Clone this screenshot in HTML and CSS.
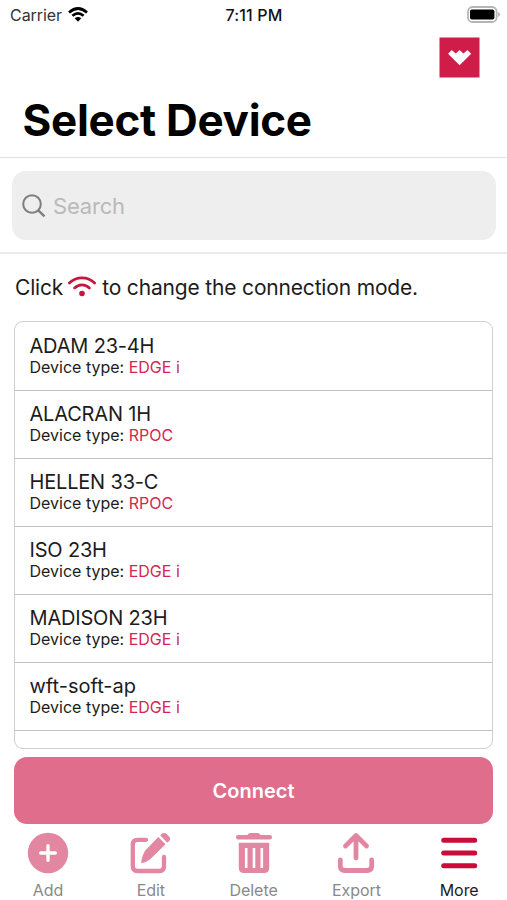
FILE: index.html
```html
<!DOCTYPE html>
<html lang="en">
<head>
<meta charset="utf-8">
<title>Select Device</title>
<link rel="stylesheet" href="styles.css">
</head>
<body>
<div class="app">
  <div class="status">
    <div class="carrier"><span>Carrier</span>
      <svg class="status-wifi" viewBox="0 0 20 15" width="20" height="15"><g fill="none" stroke="#000" stroke-width="2.7"><path d="M1 5.4Q10-2.4 19 5.4"/><path d="M4.4 8.8Q10 4 15.6 8.8"/></g><path d="M6.7 11.3Q10 8.6 13.3 11.3L10 14.7Z"/></svg>
    </div>
    <time class="clock">7:11 PM</time>
    <svg class="battery" viewBox="0 0 33 17" width="33" height="17"><rect x="1" y="1" width="28.6" height="15" rx="4.6" fill="#fff" stroke="#b5b5b5" stroke-width="1.8"/><rect x="3" y="3.4" width="24.4" height="10.2" rx="1.8"/><path d="M31.2 6v5q1.7-.8 1.7-2.5T31.2 6Z" fill="#aaa"/></svg>
  </div>
  <header class="header">
    <svg class="brand" viewBox="0 0 41 41" width="41" height="41"><path fill="#d01c48" d="M.5.5h40v40H.5z"/><path fill="#fff" d="M9 16.8 12.8 13l3.9 3.5 3.9-3.5 3.9 3.5 3.9-3.5 3.8 3.8L20.6 28.2Z"/></svg>
    <h1 class="title">Select Device</h1>
  </header>
  <div class="search-wrap">
    <div class="search">
      <svg viewBox="0 0 24 24" width="24" height="24" fill="none" stroke="#7e7e7e"><circle cx="10" cy="10" r="8.8" stroke-width="2"/><path d="m16.3 16.3 6.2 6" stroke-width="2.4"/></svg>
      <span>Search</span>
    </div>
  </div>
  <p class="hint"><span>Click</span>
    <svg class="hint-wifi" viewBox="0 0 28 21" width="28" height="21"><g fill="none" stroke="#c4163f" stroke-width="2.7" stroke-linecap="round"><path d="M1.4 7C8 .1 20 .1 26.6 7"/><path d="M6.6 12c4.2-4.3 10.6-4.3 14.8 0"/></g><circle cx="14" cy="17.5" r="2.8" fill="#c4163f"/></svg>
    <span>to change the connection mode.</span></p>
  <ul class="devices">
    <li><b>ADAM 23-4H</b><span>Device type: <em>EDGE i</em></span></li>
    <li><b>ALACRAN 1H</b><span>Device type: <em>RPOC</em></span></li>
    <li><b>HELLEN 33-C</b><span>Device type: <em>RPOC</em></span></li>
    <li><b>ISO 23H</b><span>Device type: <em>EDGE i</em></span></li>
    <li><b>MADISON 23H</b><span>Device type: <em>EDGE i</em></span></li>
    <li><b class="lower">wft-soft-ap</b><span>Device type: <em>EDGE i</em></span></li>
  </ul>
  <button class="connect">Connect</button>
  <nav class="tabs">
    <a><svg viewBox="0 0 42 42" width="42" height="42"><circle cx="21" cy="21" r="20.2" fill="#e386a1"/><path d="M21 13.6v14.8M13.6 21h14.8" stroke="#fff" stroke-width="3.3" stroke-linecap="round"/></svg><span>Add</span></a>
    <a><svg viewBox="0 0 42 42" width="42" height="42"><path d="M16 7.8H7.5Q2.8 7.8 2.8 12.5v22Q2.8 39 7.5 39h22Q34 39 34 34.5V25" fill="none" stroke="#e386a1" stroke-width="4.3" stroke-linecap="round"/><path d="M28.3 5 35.5 12.2 20.2 27.3Q15.5 31 11.2 31.2 11.2 26 15 18.8ZM30.2 3.2 32.1 1.6Q34.5.1 37 2.2L39.3 4.7Q41 7.2 39.2 9L37.3 10.7Z" fill="#e386a1"/></svg><span>Edit</span></a>
    <a><svg viewBox="0 0 42 42" width="42" height="42"><path d="M14.5 3Q15.5 1 17.5 1h7Q26.5 1 27.5 3H37q2 0 2 2.2t-2 2.4H5Q3 7.6 3 5.2t2-2.2ZM5.8 10.8h30.4V36Q36.2 41 31 41H11Q5.8 41 5.8 36Z" fill="#e386a1"/><path d="M13.2 16v20M21 16v20M28.8 16v20" stroke="#fff" stroke-width="2.6"/></svg><span>Delete</span></a>
    <a><svg viewBox="0 0 42 42" width="42" height="42" fill="none" stroke="#e386a1" stroke-width="4.8" stroke-linecap="round" stroke-linejoin="round"><path d="M21 26V4M10.5 14 21 3.5 31.5 14M5.3 28v6Q5.3 38.5 10 38.5h22Q36.7 38.5 36.7 34v-6"/></svg><span>Export</span></a>
    <a class="active"><svg viewBox="0 0 42 42" width="42" height="42" stroke="#c80d39" stroke-width="5" stroke-linecap="round"><path d="M5.7 8.3h31M5.7 21h31M5.7 33.7h31"/></svg><span>More</span></a>
  </nav>
</div>
</body>
</html>
```
FILE: styles.css
```css
* { box-sizing: border-box; }
body { margin: 0; background: #fff; color: #1c1c1c; font-family: Inter, "Liberation Sans", sans-serif; }
svg { display: block; flex: none; }
.app { width: 507px; height: 900px; display: flex; flex-direction: column; overflow: hidden; }
.status { flex: none; height: 30px; padding: 0 7px 0 10px; display: grid; grid-template-columns: 1fr auto 1fr; align-items: center; font-size: 16px; }
.carrier { display: flex; align-items: center; gap: 6px; color: #333; letter-spacing: -.05px; }
.status-wifi { margin-bottom: 1px; }
.clock { font-weight: 500; color: #111; letter-spacing: .15px; margin-right: 2px; }
.battery { justify-self: end; margin-bottom: 2px; }
.header { flex: none; height: 128px; border-bottom: 1px solid #e2e2e2; padding: 7px 27px 0 23px; }
.brand { margin-left: auto; }
.title { margin: 15px 0 0 -.5px; font-size: 44px; line-height: 54px; font-weight: 700; color: #000; letter-spacing: -.3px; white-space: nowrap; }
.search-wrap { flex: none; height: 96px; border-bottom: 2px solid #ebebeb; padding: 13px 11px 0 12px; }
.search { height: 69px; border-radius: 14px; background: #eee; display: flex; align-items: center; gap: 7px; padding-left: 10px; font-size: 22px; letter-spacing: -.2px; color: #b9b9bb; }
.hint { flex: none; height: 67px; margin: 0; padding: 0 15px; display: flex; align-items: center; font-size: 21px; letter-spacing: -.17px; white-space: nowrap; }
.hint-wifi { margin: 0 6px 2px 5px; }
.devices { flex: none; list-style: none; height: 428px; margin: 0 14px; padding: 1px 0 0; border: 1px solid #cfcfcf; border-radius: 9px; overflow: hidden; }
.devices li { height: 68px; padding: 11px 14px 0 14.5px; border-bottom: 1px solid #c2c2c2; display: flex; flex-direction: column; white-space: nowrap; }
.devices b { font-weight: 400; font-size: 20px; line-height: 24px; letter-spacing: -.18px; }
.devices .lower { letter-spacing: 0; }
.devices span { font-size: 16px; line-height: 19px; }
.devices em { font-style: normal; color: #d32650; }
.connect { flex: none; height: 67px; margin: 8px 14px 0; border: 0; border-radius: 13px; background: #e16d8c; color: #fff; font: 600 20px Inter, "Liberation Sans", sans-serif; }
.tabs { display: grid; grid-template-columns: repeat(5, 102.8px); margin-left: -3.4px; padding-top: 8px; }
.tabs a { display: flex; flex-direction: column; align-items: center; gap: 7px; color: #898989; font-size: 16px; line-height: 19px; letter-spacing: -.05px; }
.tabs .active { color: #1c1c1c; }
```
